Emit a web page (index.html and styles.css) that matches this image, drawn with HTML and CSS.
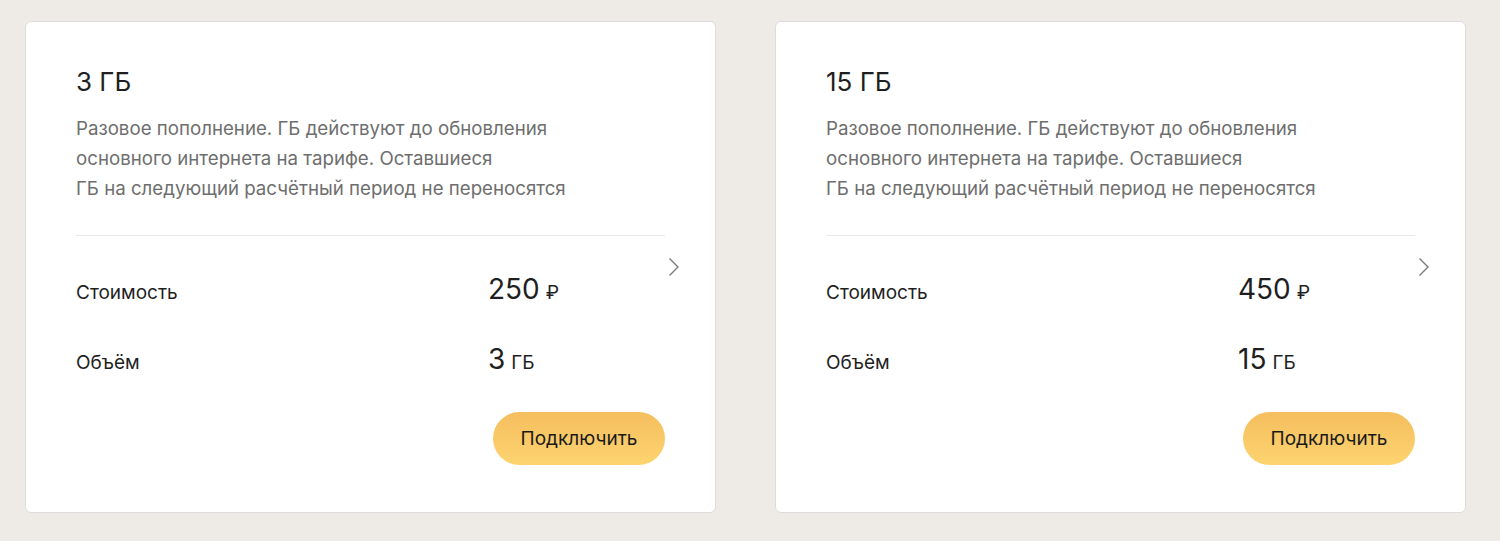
FILE: index.html
```html
<!DOCTYPE html>
<html>
<head>
  <meta charset="utf-8">
  <title>Пакеты интернета</title>
  <link rel="stylesheet" href="styles.css">
</head>
<body>
  <div class="packs">
    <div class="pack">
      <h3 class="pack-title">3 ГБ</h3>
      <p class="pack-desc">Разовое пополнение. ГБ действуют до обновления<br>основного интернета на тарифе. Оставшиеся<br>ГБ на следующий расчётный период не переносятся</p>
      <span class="pack-arrow">
        <svg width="12" height="20" viewBox="0 0 12 20"><path d="M1.5 1.5 L10 10 L1.5 18.5" fill="none" stroke="#7a7a7a" stroke-width="1.4"/></svg>
      </span>
      <div class="pack-rows">
        <div class="pack-label">Стоимость</div>
        <div class="pack-value">250<span class="unit">₽</span></div>
        <div class="pack-label">Объём</div>
        <div class="pack-value">3<span class="unit">ГБ</span></div>
      </div>
      <div class="pack-actions">
        <button class="btn-connect">Подключить</button>
      </div>
    </div>

    <div class="pack">
      <h3 class="pack-title">15 ГБ</h3>
      <p class="pack-desc">Разовое пополнение. ГБ действуют до обновления<br>основного интернета на тарифе. Оставшиеся<br>ГБ на следующий расчётный период не переносятся</p>
      <span class="pack-arrow">
        <svg width="12" height="20" viewBox="0 0 12 20"><path d="M1.5 1.5 L10 10 L1.5 18.5" fill="none" stroke="#7a7a7a" stroke-width="1.4"/></svg>
      </span>
      <div class="pack-rows">
        <div class="pack-label">Стоимость</div>
        <div class="pack-value">450<span class="unit">₽</span></div>
        <div class="pack-label">Объём</div>
        <div class="pack-value">15<span class="unit">ГБ</span></div>
      </div>
      <div class="pack-actions">
        <button class="btn-connect">Подключить</button>
      </div>
    </div>
  </div>
</body>
</html>
```

FILE: styles.css
```css
body {
  margin: 0;
  background: #eeebe6;
  font-family: Inter, 'Noto Sans', Arial, sans-serif;
  color: #1f1f1f;
}

.packs {
  display: grid;
  grid-template-columns: 691px 691px;
  gap: 59px;
  padding: 21px 34px 28px 25px;
}

.pack {
  position: relative;
  box-sizing: border-box;
  height: 492px;
  background: #fff;
  border: 1px solid #dcdcdc;
  border-radius: 6px;
  padding: 43px 50px 0 50px;
}

.pack-title {
  margin: 0;
  font-size: 26px;
  font-weight: 400;
  line-height: 34px;
}

.pack-desc {
  margin: 15px 0 0;
  font-size: 18.7px;
  line-height: 30px;
  color: #6e6e6e;
  padding-bottom: 31px;
  border-bottom: 1px solid #e9e9e9;
}

.pack-arrow {
  position: absolute;
  top: 235px;
  right: 35px;
}

.pack-rows {
  display: grid;
  grid-template-columns: 412px 1fr;
  row-gap: 32px;
  padding-top: 36px;
  align-items: baseline;
}

.pack-label {
  font-size: 19px;
  line-height: 34px;
}

.pack-value {
  font-size: 28px;
  line-height: 34px;
}

.pack-value .unit {
  margin-left: 6px;
  font-size: 19px;
}

.pack-actions {
  display: flex;
  justify-content: flex-end;
  margin-top: 32px;
}

.btn-connect {
  height: 53px;
  width: 172px;
  border: none;
  border-radius: 27px;
  background: linear-gradient(180deg, #f5be5e 0%, #fdd470 100%);
  font-family: inherit;
  font-size: 19px;
  color: #1a1a1a;
  cursor: pointer;
}
```
